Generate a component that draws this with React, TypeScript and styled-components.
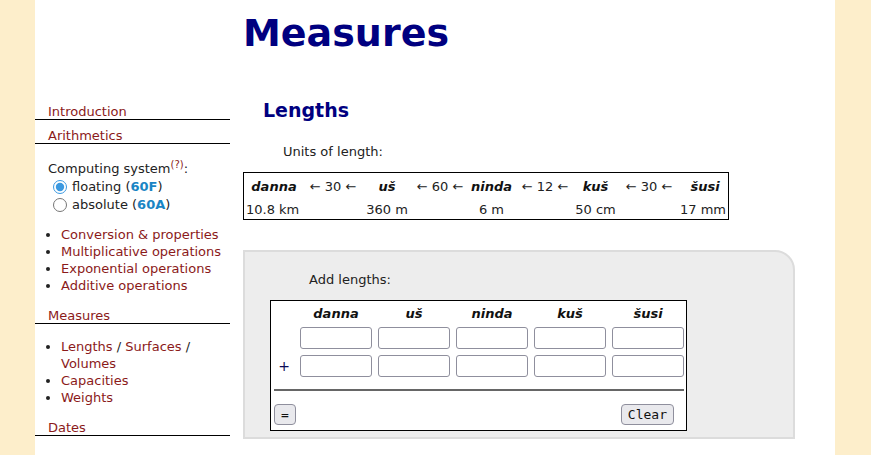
import React, {FC} from "react";
import styled, {createGlobalStyle} from "styled-components";

const GlobalStyle = createGlobalStyle`
    html, body {
        margin: 0;
        padding: 0;
        background: #fdeecb;
    }
    body {
        font-family: "DejaVu Sans", Verdana, sans-serif;
        font-size: 13px;
        color: #222;
    }
`

const Page = styled.div`
    width: 800px;
    min-height: 100vh;
    margin: 0 0 0 35px;
    background: #fff;
    display: flex;
`

const Sidebar = styled.nav`
    width: 195px;
    flex: none;
    padding-top: 96px;
`

const SideHeading = styled.div<{ $top: number }>`
    margin-top: ${p => p.$top}px;
    padding: 2px 0 0 13px;
    line-height: 15px;
    border-bottom: 1px solid #000;
`

const Link = styled.a`
    color: #8b1a1a;
    text-decoration: none;
`

const Computing = styled.div`
    margin-top: 16px;
    padding-left: 13px;
    line-height: 18px;
`

const Help = styled.sup`
    color: #8b1a1a;
    font-size: 10px;
    line-height: 0;
`

const RadioRow = styled.label`
    display: flex;
    align-items: center;
    height: 18px;
    input {
        margin: 0 5px 0 5px;
        width: 14px;
        height: 14px;
        accent-color: #3b99e0;
    }
`

const System = styled.b`
    color: #1a85c4;
`

const SideList = styled.ul<{ $top: number }>`
    margin: ${p => p.$top}px 0 0;
    padding: 0 0 0 26px;
    line-height: 17px;
`

const Main = styled.main`
    flex: 1;
    padding: 0 40px 0 13px;
`

const Title = styled.h1`
    margin: 11px 0 0;
    font-size: 38px;
    line-height: 44px;
    font-weight: bold;
    color: #000080;
`

const Subtitle = styled.h2`
    margin: 44px 0 0 20px;
    font-size: 19px;
    line-height: 22px;
    color: #000080;
`

const Para = styled.p<{ $top: number; $indent: number }>`
    margin: ${p => p.$top}px 0 0;
    padding-left: ${p => p.$indent}px;
    line-height: 17px;
`

const UnitTable = styled.div`
    display: grid;
    width: fit-content;
    grid-template-columns: 56px 62px 46px 60px 43px 64px 37px 70px 42px;
    row-gap: 6px;
    margin-top: 12px;
    padding: 5px 2px 1px;
    border: 1px solid #000;
    line-height: 17px;
`

const Cell = styled.span<{ $align?: string }>`
    justify-self: ${p => p.$align || "center"};
    white-space: nowrap;
`

const Unit = styled(Cell)`
    font-weight: bold;
    font-style: italic;
    color: #111;
`

const Exercise = styled.section`
    margin-top: 30px;
    padding: 0 0 6px 25px;
    background: #ededed;
    border: 2px solid #dcdcdc;
    border-top-right-radius: 20px;
`

const Form = styled.div`
    margin-top: 12px;
    width: fit-content;
    padding: 2px 2px 5px 3px;
    background: #fff;
    border: 1px solid #000;
`

const Row = styled.div<{ $top: number }>`
    display: grid;
    grid-template-columns: 20px repeat(5, 72px);
    column-gap: 6px;
    margin-top: ${p => p.$top}px;
    align-items: center;
    justify-items: center;
`

const ColName = styled.span`
    line-height: 22px;
    font-weight: bold;
    font-style: italic;
    color: #111;
`

const Plus = styled.span`
    color: #0b0b55;
    font-size: 14px;
`

const Field = styled.input`
    box-sizing: border-box;
    width: 72px;
    height: 22px;
    margin: 0;
    padding: 0 3px;
    border: 1px solid #8f8f9d;
    border-radius: 3px;
    background: #fff;
`

const Rule = styled.div`
    height: 2px;
    margin-top: 12px;
    background: #666;
`

const Buttons = styled.div`
    display: flex;
    justify-content: space-between;
    margin-top: 13px;
    padding-right: 10px;
`

const Button = styled.button`
    box-sizing: border-box;
    height: 21px;
    min-width: 20px;
    margin: 0;
    padding: 0 6px;
    font-family: "DejaVu Sans Mono", "Liberation Mono", monospace;
    font-size: 13px;
    color: #111;
    background: #e9e9ed;
    border: 1px solid #8f8f9d;
    border-radius: 4px;
`

const units = ["danna", "uš", "ninda", "kuš", "šusi"];
const ratios = ["30", "60", "12", "30"];
const sizes = ["10.8 km", "360 m", "6 m", "50 cm", "17 mm"];

const App: FC = () => {
    return <>
        <GlobalStyle/>
        <Page>
            <Sidebar>
                <SideHeading $top={6}><Link href="#">Introduction</Link></SideHeading>
                <SideHeading $top={6}><Link href="#">Arithmetics</Link></SideHeading>
                <Computing>
                    Computing system<Help>(?)</Help>:
                    <RadioRow><input type="radio" name="sys" defaultChecked/>floating (<System>60F</System>)</RadioRow>
                    <RadioRow><input type="radio" name="sys"/>absolute (<System>60A</System>)</RadioRow>
                </Computing>
                <SideList $top={12}>
                    <li><Link href="#">Conversion &amp; properties</Link></li>
                    <li><Link href="#">Multiplicative operations</Link></li>
                    <li><Link href="#">Exponential operations</Link></li>
                    <li><Link href="#">Additive operations</Link></li>
                </SideList>
                <SideHeading $top={12}><Link href="#">Measures</Link></SideHeading>
                <SideList $top={14}>
                    <li><Link href="#">Lengths</Link> / <Link href="#">Surfaces</Link> / <Link href="#">Volumes</Link></li>
                    <li><Link href="#">Capacities</Link></li>
                    <li><Link href="#">Weights</Link></li>
                </SideList>
                <SideHeading $top={12}><Link href="#">Dates</Link></SideHeading>
            </Sidebar>
            <Main>
                <Title>Measures</Title>
                <Subtitle>Lengths</Subtitle>
                <Para $top={22} $indent={40}>Units of length:</Para>
                <UnitTable>
                    {units.map((u, i) => <React.Fragment key={u}>
                        <Unit>{u}</Unit>
                        {i < ratios.length && <Cell>← {ratios[i]} ←</Cell>}
                    </React.Fragment>)}
                    {sizes.map((s, i) => <React.Fragment key={s}>
                        <Cell $align={i === 0 ? "start" : i === sizes.length - 1 ? "end" : "center"}>{s}</Cell>
                        {i < ratios.length && <Cell/>}
                    </React.Fragment>)}
                </UnitTable>
                <Exercise>
                    <Para $top={19} $indent={39}>Add lengths:</Para>
                    <Form>
                        <Row $top={0}>
                            <span/>
                            {units.map(u => <ColName key={u}>{u}</ColName>)}
                        </Row>
                        <Row $top={2}>
                            <span/>
                            {units.map(u => <Field key={u} type="text"/>)}
                        </Row>
                        <Row $top={6}>
                            <Plus>+</Plus>
                            {units.map(u => <Field key={u} type="text"/>)}
                        </Row>
                        <Rule/>
                        <Buttons>
                            <Button>=</Button>
                            <Button>Clear</Button>
                        </Buttons>
                    </Form>
                </Exercise>
            </Main>
        </Page>
    </>
}

export default App
